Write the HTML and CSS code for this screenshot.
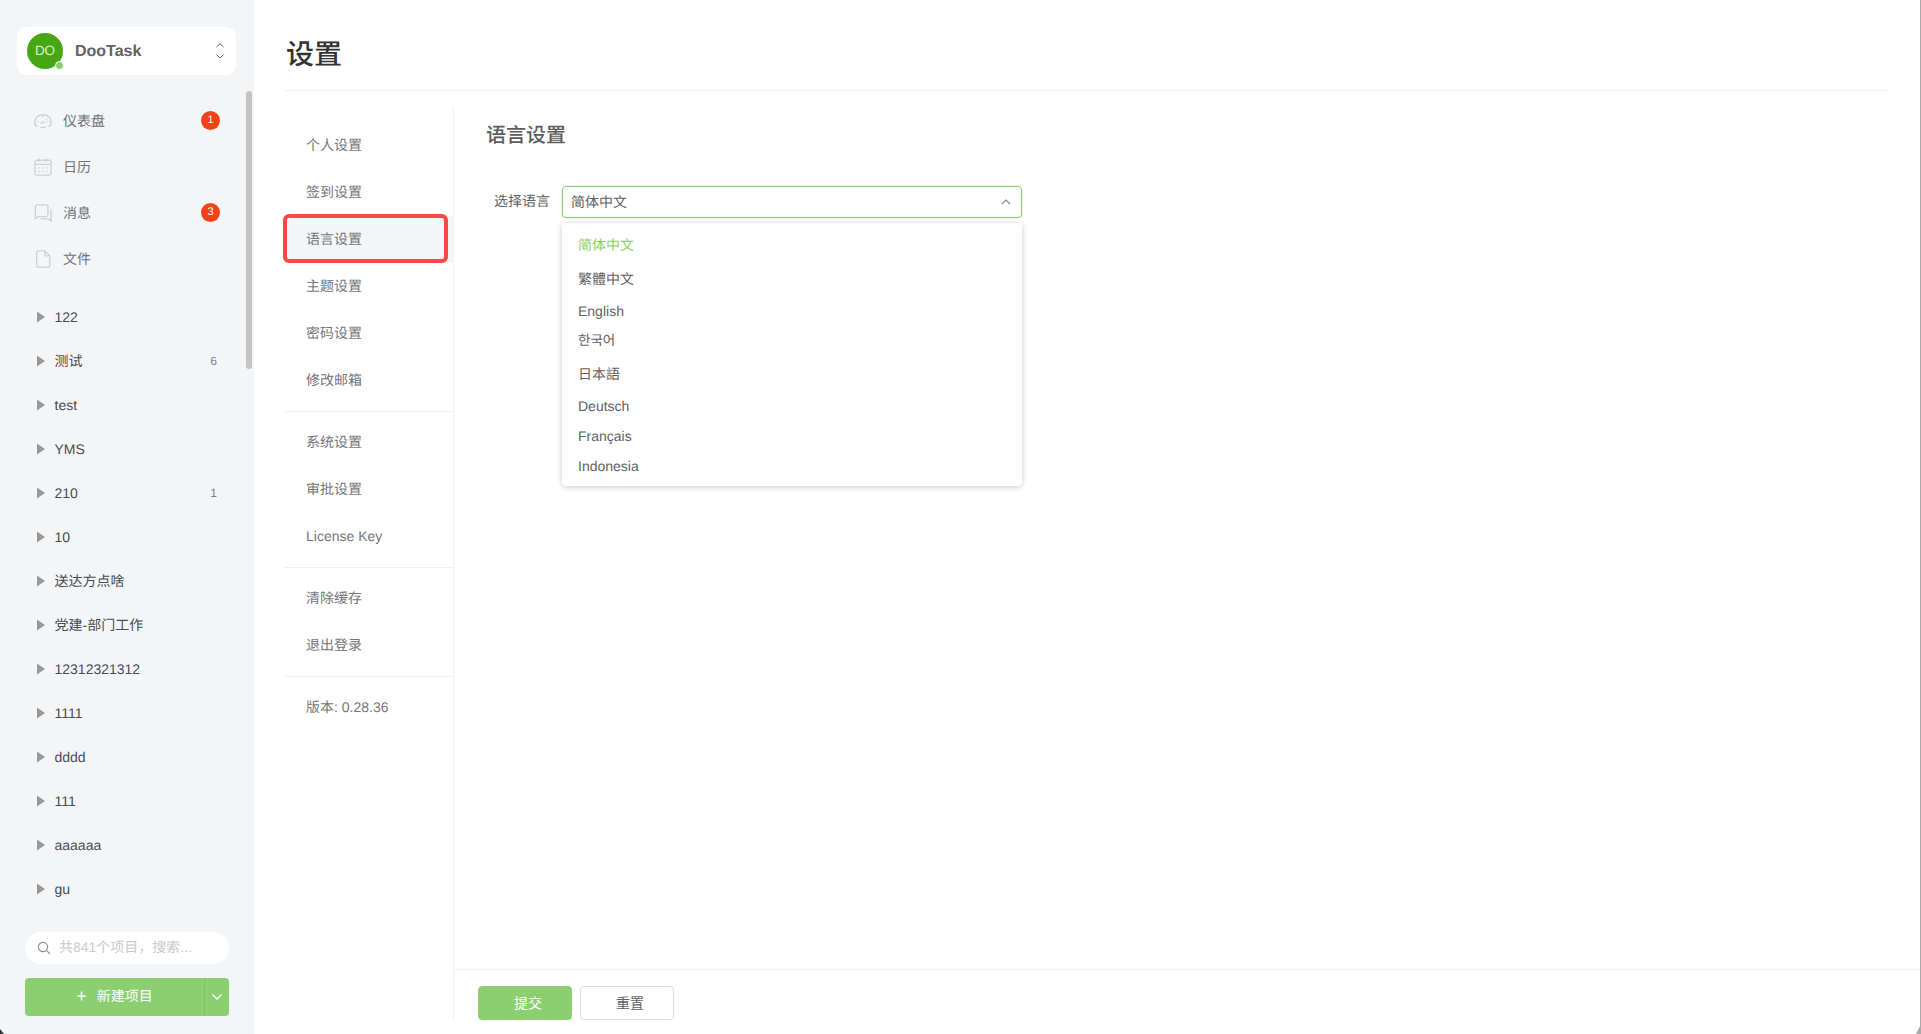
FILE: index.html
```html
<!DOCTYPE html>
<html lang="zh-CN">
<head>
<meta charset="utf-8">
<title>设置</title>
<link rel="stylesheet" href="styles.css">
</head>
<body>
<div class="app">
  <aside class="sidebar">
    <div class="team">
      <div class="avatar">DO<span class="online"></span></div>
      <div class="team-name">DooTask</div>
      <svg class="updown" width="8" height="16" viewBox="0 0 8 16"><path d="M.5 4 4 .8 7.500 4M.5 11.500 4 15l3.500-3.500"/></svg>
    </div>
    <nav class="nav">
      <div class="nav-item">
        <svg class="nav-icon" viewBox="0 0 20 20"><path d="M4 16H2.600A8.200 8.200 0 0 1 1 11 9 8 0 0 1 19 11a8.200 8.200 0 0 1-1.600 5H16M7 17h6M7.500 12.500l5-1.500M10 4.500V6M3.800 11h1.500M14.700 11h1.500M14.500 7.500l-1 .8"/></svg>
        <span class="nav-label">仪表盘</span><span class="badge">1</span>
      </div>
      <div class="nav-item">
        <svg class="nav-icon" viewBox="0 0 20 20"><rect x="1" y="2.500" width="18" height="16.500" rx="2"/><path d="M1 7h18M6 .5V4M14 .5V4M5 11h1.500M9.300 11h1.500M13.500 11H15M5 15h1.500M9.300 15h1.500M13.500 15H15"/></svg>
        <span class="nav-label">日历</span>
      </div>
      <div class="nav-item">
        <svg class="nav-icon" viewBox="0 0 20 20"><path d="M15.500 12a2 2 0 0 1-2 2H5l-3.500 2V3a2 2 0 0 1 2-2h10a2 2 0 0 1 2 2zM19 5.500V19l-3-2.500H7"/></svg>
        <span class="nav-label">消息</span><span class="badge">3</span>
      </div>
      <div class="nav-item">
        <svg class="nav-icon" viewBox="0 0 20 20"><path d="M4.500 1h7.500l5.500 5.500V17.500A1.500 1.500 0 0 1 16 19H4.500A1.500 1.500 0 0 1 3 17.500V2.500A1.500 1.500 0 0 1 4.500 1zM12 1v4a1.500 1.500 0 0 0 1.500 1.500h4"/></svg>
        <span class="nav-label">文件</span>
      </div>
    </nav>
    <ul class="projects">
      <li class="project"><i class="caret"></i><span class="project-name">122</span></li>
      <li class="project"><i class="caret"></i><span class="project-name">测试</span><span class="count">6</span></li>
      <li class="project"><i class="caret"></i><span class="project-name">test</span></li>
      <li class="project"><i class="caret"></i><span class="project-name">YMS</span></li>
      <li class="project"><i class="caret"></i><span class="project-name">210</span><span class="count">1</span></li>
      <li class="project"><i class="caret"></i><span class="project-name">10</span></li>
      <li class="project"><i class="caret"></i><span class="project-name">送达方点啥</span></li>
      <li class="project"><i class="caret"></i><span class="project-name">党建-部门工作</span></li>
      <li class="project"><i class="caret"></i><span class="project-name">12312321312</span></li>
      <li class="project"><i class="caret"></i><span class="project-name">1111</span></li>
      <li class="project"><i class="caret"></i><span class="project-name">dddd</span></li>
      <li class="project"><i class="caret"></i><span class="project-name">111</span></li>
      <li class="project"><i class="caret"></i><span class="project-name">aaaaaa</span></li>
      <li class="project"><i class="caret"></i><span class="project-name">gu</span></li>
    </ul>
    <div class="search">
      <svg class="search-icon" width="14" height="14" viewBox="0 0 14 14"><circle cx="6" cy="6" r="4.600"/><path d="m9.400 9.400 3.600 3.600"/></svg>
      <span class="search-text">共841个项目&#xFF0C;搜索...</span>
    </div>
    <div class="new-project">
      <div class="new-main"><span class="plus">+</span><span>新建项目</span></div>
      <div class="new-more"><svg width="12" height="8" viewBox="0 0 12 8"><path d="m1.500 1.500 4.500 4.500 4.500-4.500"/></svg></div>
    </div>
    <div class="scrollbar"></div>
    <div class="corner-left"></div>
  </aside>

  <main class="main">
    <header class="page-head"><h1 class="page-title">设置</h1></header>
    <div class="page-body">
      <div class="menu">
        <div class="menu-item">个人设置</div>
        <div class="menu-item">签到设置</div>
        <div class="menu-item is-active">语言设置<span class="highlight"></span></div>
        <div class="menu-item">主题设置</div>
        <div class="menu-item">密码设置</div>
        <div class="menu-item">修改邮箱</div>
        <div class="menu-divider"></div>
        <div class="menu-item">系统设置</div>
        <div class="menu-item">审批设置</div>
        <div class="menu-item">License Key</div>
        <div class="menu-divider"></div>
        <div class="menu-item">清除缓存</div>
        <div class="menu-item">退出登录</div>
        <div class="menu-divider"></div>
        <div class="menu-item">版本: 0.28.36</div>
      </div>
      <section class="content">
        <div class="content-top">
          <h2 class="section-title">语言设置</h2>
          <div class="form-row">
            <label class="form-label">选择语言</label>
            <div class="select">
              <div class="select-box">
                <span>简体中文</span>
                <svg class="select-arrow" width="10" height="6" viewBox="0 0 10 6"><path d="M1 5 5 1l4 4"/></svg>
              </div>
              <ul class="dropdown">
                <li class="opt opt-cjk is-selected">简体中文</li>
                <li class="opt opt-cjk">繁體中文</li>
                <li class="opt">English</li>
                <li class="opt opt-ko">한국어</li>
                <li class="opt opt-cjk">日本語</li>
                <li class="opt">Deutsch</li>
                <li class="opt">Français</li>
                <li class="opt">Indonesia</li>
              </ul>
            </div>
          </div>
        </div>
        <footer class="form-foot">
          <button class="btn btn-primary" type="button">提交</button>
          <button class="btn" type="button">重置</button>
        </footer>
      </section>
    </div>
    <div class="corner-right"></div>
  </main>
</div>
</body>
</html>
```
FILE: styles.css
```css
* { box-sizing: border-box; }
html, body { margin: 0; padding: 0; height: 100%; background: #fff; overflow: hidden; }
body { font-family: "Liberation Sans", "Noto Sans CJK SC", sans-serif; font-size: 14px; color: #606266; text-rendering: geometricPrecision; }
ul { list-style: none; margin: 0; padding: 0; }
h1, h2 { margin: 0; }

.app { display: flex; width: 1921px; height: 1034px; }

/* Sidebar */
.sidebar { position: relative; flex: 0 0 254px; background: #f4f5f7; padding-top: 27px; display: flex; flex-direction: column; }
.team { display: flex; align-items: center; height: 48px; margin: 0 18px 0 17px; padding: 0 12px 0 10px; background: #fff; border-radius: 10px; }
.avatar { position: relative; flex: none; width: 36px; height: 36px; border-radius: 50%; background: #47a614; color: #d8efcb; font-size: 13.500px; line-height: 36px; text-align: center; }
.online { position: absolute; right: -1px; bottom: -1px; width: 7px; height: 7px; border-radius: 50%; background: #87d068; border: 1px solid #fff; box-sizing: content-box; }
.team-name { flex: 1; margin-left: 12px; padding-top: 1px; font-size: 16px; font-weight: 700; color: #606266; }
.updown path { fill: none; stroke: #606266; stroke-width: 1; }

.nav { margin-top: 23px; }
.nav-item { display: flex; align-items: center; height: 46px; padding: 0 34px 1px 34px; }
.nav-icon { flex: none; width: 18px; height: 18px; fill: none; stroke: #cfd1d5; stroke-width: 1.500; }
.nav-label { flex: 1; margin-left: 11px; color: #727479; }
.badge { flex: none; width: 19px; height: 19px; border-radius: 50%; background: #f1421a; color: #fff; font-size: 11px; line-height: 19px; text-align: center; }

.projects { margin-top: 13px; flex: none; }
.project { display: flex; align-items: center; height: 44px; padding: 0 37px; color: #4a4c50; }
.caret { flex: none; width: 8px; height: 11px; background: #999; clip-path: polygon(0 0, 100% 50%, 0 100%); margin-right: 9.500px; }
.project-name { flex: 1; }
.count { font-size: 12px; color: #808287; }

.search { display: flex; align-items: center; height: 32px; margin: 21px 25px 0 25px; padding-left: 12px; background: #fff; border-radius: 16px; }
.search-icon { flex: none; fill: none; stroke: #8d909a; stroke-width: 1.200; }
.search-text { margin: 0 0 2px 8px; color: #c8cacf; }

.new-project { display: flex; height: 38px; margin: 14px 25px 0 25px; background: #8bcf70; border-radius: 4px; color: #fff; }
.new-main { flex: 1; display: flex; align-items: center; justify-content: center; gap: 10px; padding-bottom: 2px; }
.plus { font-size: 18px; line-height: 1; font-weight: 400; }
.new-more { flex: 0 0 25px; display: flex; align-items: center; justify-content: center; border-left: 1px solid #7fc364; }
.new-more path { fill: none; stroke: #fff; stroke-width: 1.400; }

.scrollbar { position: absolute; left: 246px; top: 91px; width: 6px; height: 278px; border-radius: 3px; background: #c4c4c4; }
.corner-left { position: absolute; left: 0; bottom: 0; width: 4px; height: 5px; background: #333; clip-path: polygon(0 0, 100% 100%, 0 100%); }

/* Main */
.main { position: relative; flex: 1; min-width: 0; display: flex; flex-direction: column; border-right: 1px solid #aaa; }
.page-head { flex: none; height: 91px; margin: 0 32px 0 30px; border-bottom: 1px solid #f1f1f2; padding: 37px 0 0 2px; }
.page-title { font-size: 28px; line-height: 36px; font-weight: 500; color: #333; }
.page-body { flex: 1; min-height: 0; display: flex; margin: 16px 0 14px 30px; }

.menu { flex: 0 0 170px; padding-top: 15px; border-right: 1px solid #f1f1f2; }
.menu-item { position: relative; height: 47px; line-height: 47px; padding-left: 22px; color: #75777a; }
.menu-item.is-active { background: #f4f5f7; }
.highlight { position: absolute; left: -1px; top: -2px; width: 165px; height: 49px; border: 4px solid #f54a45; border-radius: 6px; }
.menu-divider { height: 1px; margin: 7px 0; background: #f1f1f2; }

.content { flex: 1; min-width: 0; display: flex; flex-direction: column; }
.content-top { flex: 1; min-height: 0; padding: 15px 0 0 32px; }
.section-title { font-size: 20px; line-height: 28px; font-weight: 500; color: #5c5c5f; }
.form-row { display: flex; align-items: flex-start; margin-top: 36px; padding-left: 8px; }
.form-label { flex: none; width: 68px; line-height: 31px; color: #606266; }
.select { position: relative; flex: none; width: 460px; }
.select-box { display: flex; align-items: center; justify-content: space-between; height: 32px; padding: 0 10px 1px 8px; border: 1px solid #8bcf70; border-radius: 4px; box-shadow: 0 0 0 1px rgba(139, 207, 112, .2); color: #606266; }
.select-arrow { margin-top: 1px; }
.select-arrow path { fill: none; stroke: #808695; stroke-width: 1.200; }
.dropdown { position: absolute; z-index: 2; left: 0; right: 0; top: 37px; padding: 5px 0; background: #fff; border-radius: 4px; box-shadow: 0 1px 6px rgba(0, 0, 0, .2); }
.opt { height: 30px; line-height: 30px; padding-left: 16px; color: #606266; }
.opt-ko { height: 31px; font-size: 13.500px; }
.opt-cjk { height: 34px; line-height: 34px; }
.opt.is-selected { color: #8bcf70; }

.form-foot { flex: none; display: flex; gap: 8px; height: 51px; padding: 16px 0 0 24px; border-top: 1px solid #f1f1f2; }
.btn { width: 94px; height: 34px; padding: 0 0 2px 6px; background: #fff; border: 1px solid #dcdee2; border-radius: 4px; font: inherit; color: #606266; }
.btn-primary { background: #8bcf70; border-color: #8bcf70; color: #fff; }
.corner-right { position: absolute; right: -1px; bottom: 0; width: 5px; height: 10px; background: #aaa; clip-path: polygon(100% 0, 100% 100%, 0 100%); }
```
